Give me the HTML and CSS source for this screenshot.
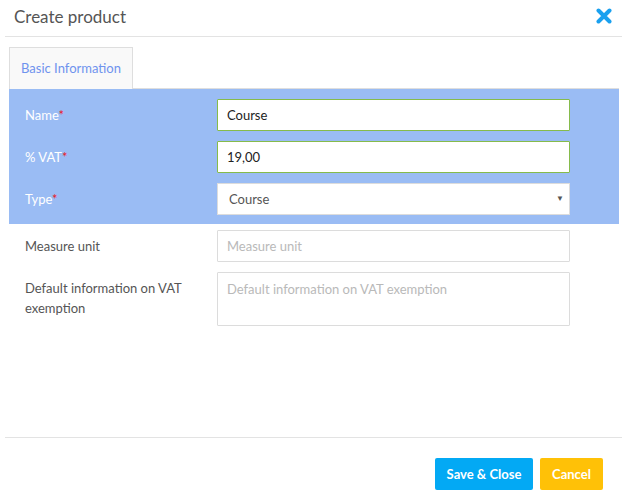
FILE: index.html
```html
<!DOCTYPE html>
<html>
<head>
<meta charset="utf-8">
<link rel="stylesheet" href="styles.css">
</head>
<body>
<div class="modal">
  <div class="modal-header">
    <h1 class="modal-title">Create product</h1>
    <button class="close" aria-label="Close">
      <svg width="16" height="16" viewBox="0 0 16 16"><path d="M2.5 2.5 L13.5 13.5 M13.5 2.5 L2.5 13.5" stroke="#1aa0ef" stroke-width="4" stroke-linecap="round"/></svg>
    </button>
  </div>
  <div class="modal-body">
    <div class="tabs">
      <div class="tab active">Basic Information</div>
    </div>
    <div class="panel">
      <div class="row">
        <label class="label">Name<span class="req">*</span></label>
        <input class="input valid" type="text" value="Course">
      </div>
      <div class="row">
        <label class="label">% VAT<span class="req">*</span></label>
        <input class="input valid" type="text" value="19,00">
      </div>
      <div class="row">
        <label class="label">Type<span class="req">*</span></label>
        <div class="select">
          <span>Course</span>
          <span class="caret">▼</span>
        </div>
      </div>
    </div>
    <div class="plain">
      <div class="row">
        <label class="label">Measure unit</label>
        <input class="input" type="text" placeholder="Measure unit">
      </div>
      <div class="row">
        <label class="label wrap">Default information on VAT exemption</label>
        <textarea class="input textarea" placeholder="Default information on VAT exemption"></textarea>
      </div>
    </div>
  </div>
  <div class="modal-footer">
    <button class="btn btn-save">Save &amp; Close</button>
    <button class="btn btn-cancel">Cancel</button>
  </div>
</div>
</body>
</html>
```
FILE: styles.css
```css
* { box-sizing: border-box; }
html, body { margin: 0; padding: 0; background: #fff; }
body { font-family: Lato, "Open Sans", sans-serif; color: #555; font-size: 13px; }

.modal {
  width: 631px;
  height: 500px;
  display: flex;
  flex-direction: column;
  padding: 0 9px 0 5px;
}

.modal-header {
  height: 37px;
  display: flex;
  align-items: center;
  justify-content: space-between;
  border-bottom: 1px solid #e3e3e3;
  padding: 0 10px 0 9px;
}
.modal-title {
  margin: 0;
  font-size: 17px;
  font-weight: 400;
  color: #555;
  padding-bottom: 3px;
}
.close {
  border: 0;
  background: none;
  padding: 0;
  width: 16px;
  height: 16px;
  margin-bottom: 4px;
  cursor: pointer;
}
.close svg { display: block; }

.modal-body {
  flex: 1;
  padding: 10px 3px 0 4px;
}

.tabs {
  display: flex;
  border-bottom: 1px solid #dedede;
}
.tab {
  height: 42px;
  width: 124px;
  display: flex;
  align-items: center;
  justify-content: center;
  background: #f9f9f9;
  border: 1px solid #dedede;
  border-bottom: 0;
  color: #6f93ee;
  font-size: 13px;
  margin-bottom: -1px;
  padding-bottom: 2px;
}

.panel {
  background: #9abcf4;
  padding: 10px 49px 9px 16px;
  display: flex;
  flex-direction: column;
  gap: 10px;
}
.plain {
  padding: 6px 49px 0 16px;
  display: flex;
  flex-direction: column;
  gap: 10px;
}

.row {
  display: flex;
  align-items: center;
}
.row:has(.textarea) { align-items: flex-start; }

.label {
  width: 192px;
  flex: none;
  font-size: 13px;
  color: #555;
}
.panel .label { color: #fff; }
.label.wrap {
  width: 192px;
  padding-right: 20px;
  line-height: 20px;
  padding-top: 6px;
}
.req { color: #e8202a; }

.input {
  width: 353px;
  height: 32px;
  border: 1px solid #dcdcdc;
  background: #fff;
  font-family: inherit;
  font-size: 13px;
  color: #222;
  padding: 0 9px;
  outline: none;
  border-radius: 1px;
}
.input::placeholder { color: #b9b9b9; }
.input.valid { border-color: #86bb4b; }

.textarea {
  height: 54px;
  resize: none;
  padding-top: 7px;
  line-height: 18px;
}

.select {
  width: 353px;
  height: 32px;
  background: #fff;
  border: 1px solid #dcdcdc;
  display: flex;
  align-items: center;
  justify-content: space-between;
  padding: 0 5px 0 11px;
  color: #555;
  font-size: 13px;
}
.caret {
  font-size: 8px;
  color: #555;
  margin-top: -2px;
}

.modal-footer {
  height: 63px;
  border-top: 1px solid #e3e3e3;
  display: flex;
  justify-content: flex-end;
  align-items: flex-start;
  gap: 7px;
  padding: 20px 19px 0 0;
}
.btn {
  height: 32px;
  border: 0;
  border-radius: 2px;
  color: #fff;
  font-family: inherit;
  font-size: 13px;
  font-weight: 700;
  padding: 0 10px;
  cursor: pointer;
}
.btn-save { background: #03a9f4; width: 98px; }
.btn-cancel { background: #ffc107; width: 63px; }
```
